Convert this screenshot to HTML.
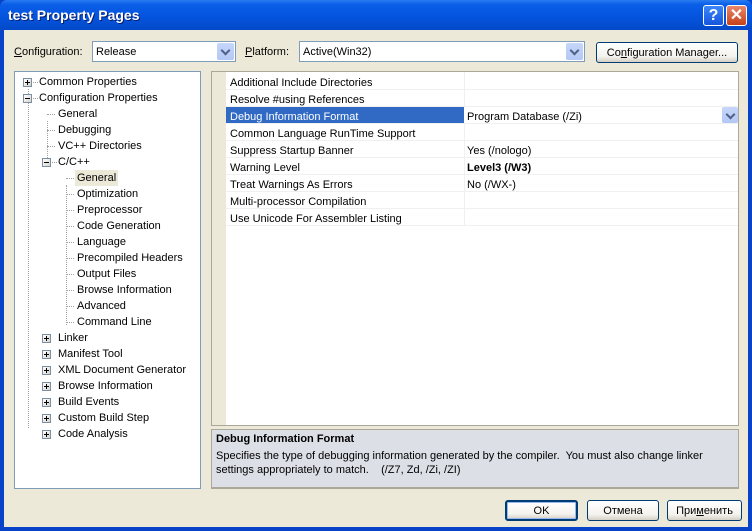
<!DOCTYPE html><html><head><style>
*{margin:0;padding:0;box-sizing:border-box}
body{width:752px;height:531px;overflow:hidden;background:#0842c8;font-family:"Liberation Sans",sans-serif;font-size:11px;color:#000;position:relative}
.a{position:absolute;white-space:nowrap}
#tb{left:0;top:0;width:752px;height:30px;background:linear-gradient(#2a7cf0 0,#0a5ee8 15%,#0453dc 60%,#0349c8 100%);border-radius:7px 7px 0 0}
#title{left:8px;top:7px;color:#fff;font-weight:bold;font-size:14px;text-shadow:1px 1px #0a1e6e}
#body{left:4px;top:30px;width:744px;height:497px;background:#ece9d8}
.cb{background:#fff;border:1px solid #7f9db9;height:21px;padding:4px 3px}
.dd{position:absolute;right:1px;top:1px;width:17px;height:17px;background:linear-gradient(#c6d6fb,#b3c8f5);border-radius:2px;}
.dd:after{content:"";position:absolute;left:5px;top:4px;width:5px;height:5px;border-right:2px solid #4d6185;border-bottom:2px solid #4d6185;transform:rotate(45deg)}
.btn{border:1px solid #003c74;border-radius:3px;background:linear-gradient(#fff,#f4f3ee 70%,#d6d0c5);text-align:center;padding-top:4px;height:21px}
.panel{background:#fff;border:1px solid #7f9db9}
.ti{position:absolute;height:16px;line-height:16px}
.pb{position:absolute;width:9px;height:9px;border:1px solid #7a8ea8;background:linear-gradient(135deg,#fff,#d8d4c8);}
.pb:before{content:"";position:absolute;left:1px;top:3px;width:5px;height:1px;background:#000}
.pb.p:after{content:"";position:absolute;left:3px;top:1px;width:1px;height:5px;background:#000}
.hl{position:absolute;border-top:1px dotted #a0a0a0;width:8px}
.vl{position:absolute;border-left:1px dotted #a0a0a0}
.row{position:absolute;left:14px;width:512px;height:17px;border-bottom:1px solid #f0f0f0;line-height:16px}
.row span{position:absolute;left:4px;top:2px}
.row b{position:absolute;left:241px;top:2px;font-weight:normal}
</style></head><body>
<div class="a" id="tb"></div>
<div class="a" id="title">test Property Pages</div>
<div class="a" style="left:703px;top:5px;width:21px;height:21px;border:1px solid #fff;border-radius:3px;background:linear-gradient(#3c86f8,#1556de);color:#fff;font-weight:bold;font-size:16px;text-align:center;line-height:19px">?</div>
<div class="a" style="left:726px;top:5px;width:21px;height:21px;border:1px solid #fff;border-radius:3px;background:linear-gradient(#e8886a,#c8401a);color:#fff;font-weight:bold;font-size:16px;text-align:center;line-height:19px">✕</div>
<div class="a" id="body"></div>

<div class="a" style="left:14px;top:46px"><u>C</u>onfiguration:</div>
<div class="a cb" style="left:92px;top:41px;width:144px">Release<div class="dd"></div></div>
<div class="a" style="left:245px;top:46px"><u>P</u>latform:</div>
<div class="a cb" style="left:299px;top:41px;width:286px">Active(Win32)<div class="dd"></div></div>
<div class="a btn" style="left:596px;top:42px;width:142px">Co<u>n</u>figuration Manager...</div>

<div class="a panel" style="left:14px;top:71px;width:187px;height:418px">
<div class="vl" style="left:13px;top:17px;height:339px"></div>
<div class="vl" style="left:32px;top:49px;height:43px"></div>
<div class="vl" style="left:51px;top:113px;height:140px"></div>
</div>

<div class="a panel" style="left:211px;top:71px;width:528px;height:355px;border-color:#aca899">
<div class="a" style="left:0;top:0;width:14px;height:353px;background:#ece9d8"></div>
<div class="a" style="left:252px;top:0;width:1px;height:153px;background:#f0f0f0"></div>
<div class="row" style="top:1px"><span>Additional Include Directories</span></div>
<div class="row" style="top:18px"><span>Resolve #using References</span></div>
<div class="row" style="top:35px;background:linear-gradient(90deg,#316ac5 0,#316ac5 238px,#fff 238px);color:#fff"><span>Debug Information Format</span><b style="color:#000">Program Database (/Zi)</b><div class="dd" style="right:0;top:0;width:16px;height:16px"></div></div>
<div class="row" style="top:52px"><span>Common Language RunTime Support</span></div>
<div class="row" style="top:69px"><span>Suppress Startup Banner</span><b>Yes (/nologo)</b></div>
<div class="row" style="top:86px"><span>Warning Level</span><b style="font-weight:bold">Level3 (/W3)</b></div>
<div class="row" style="top:103px"><span>Treat Warnings As Errors</span><b>No (/WX-)</b></div>
<div class="row" style="top:120px"><span>Multi-processor Compilation</span></div>
<div class="row" style="top:137px"><span>Use Unicode For Assembler Listing</span></div>
</div>
<div class="a" style="left:211px;top:429px;width:528px;height:60px;background:#dddfe7;border:1px solid #aca899;border-bottom:2px solid #aca899">
<div class="a" style="left:4px;top:3px;font-weight:bold">Debug Information Format</div>
<div class="a" style="left:4px;top:19px;line-height:14px">Specifies the type of debugging information generated by the compiler.&nbsp; You must also change linker<br>settings appropriately to match.&nbsp;&nbsp;&nbsp; (/Z7, Zd, /Zi, /ZI)</div>
</div>

<div class="a btn" style="left:505px;top:500px;width:73px;border-width:2px;box-shadow:inset 0 0 0 1px #98b8f0;padding-top:3px">OK</div>
<div class="a btn" style="left:587px;top:500px;width:72px">Отмена</div>
<div class="a btn" style="left:667px;top:500px;width:75px">При<u>м</u>енить</div>

<div class="a" style="left:14px;top:76px;width:186px;height:370px">
<div class="pb p" style="left:9px;top:2px"></div><div class="hl" style="left:19px;top:6px;width:5px"></div><div class="ti" style="left:25px;top:-2px">Common Properties</div>
<div class="pb" style="left:9px;top:18px"></div><div class="hl" style="left:19px;top:22px;width:5px"></div><div class="ti" style="left:25px;top:14px">Configuration Properties</div>
<div class="hl" style="left:33px;top:38px"></div><div class="ti" style="left:44px;top:30px">General</div>
<div class="hl" style="left:33px;top:54px"></div><div class="ti" style="left:44px;top:46px">Debugging</div>
<div class="hl" style="left:33px;top:70px"></div><div class="ti" style="left:44px;top:62px">VC++ Directories</div>
<div class="pb" style="left:28px;top:82px"></div><div class="hl" style="left:38px;top:86px;width:5px"></div><div class="ti" style="left:44px;top:78px">C/C++</div>
<div class="hl" style="left:52px;top:102px"></div><div class="ti" style="left:61px;top:94px;background:#ece9d8;padding:0 2px">General</div>
<div class="hl" style="left:52px;top:118px"></div><div class="ti" style="left:63px;top:110px">Optimization</div>
<div class="hl" style="left:52px;top:134px"></div><div class="ti" style="left:63px;top:126px">Preprocessor</div>
<div class="hl" style="left:52px;top:150px"></div><div class="ti" style="left:63px;top:142px">Code Generation</div>
<div class="hl" style="left:52px;top:166px"></div><div class="ti" style="left:63px;top:158px">Language</div>
<div class="hl" style="left:52px;top:182px"></div><div class="ti" style="left:63px;top:174px">Precompiled Headers</div>
<div class="hl" style="left:52px;top:198px"></div><div class="ti" style="left:63px;top:190px">Output Files</div>
<div class="hl" style="left:52px;top:214px"></div><div class="ti" style="left:63px;top:206px">Browse Information</div>
<div class="hl" style="left:52px;top:230px"></div><div class="ti" style="left:63px;top:222px">Advanced</div>
<div class="hl" style="left:52px;top:246px"></div><div class="ti" style="left:63px;top:238px">Command Line</div>
<div class="pb p" style="left:28px;top:258px"></div><div class="ti" style="left:44px;top:254px">Linker</div>
<div class="pb p" style="left:28px;top:274px"></div><div class="ti" style="left:44px;top:270px">Manifest Tool</div>
<div class="pb p" style="left:28px;top:290px"></div><div class="ti" style="left:44px;top:286px">XML Document Generator</div>
<div class="pb p" style="left:28px;top:306px"></div><div class="ti" style="left:44px;top:302px">Browse Information</div>
<div class="pb p" style="left:28px;top:322px"></div><div class="ti" style="left:44px;top:318px">Build Events</div>
<div class="pb p" style="left:28px;top:338px"></div><div class="ti" style="left:44px;top:334px">Custom Build Step</div>
<div class="pb p" style="left:28px;top:354px"></div><div class="ti" style="left:44px;top:350px">Code Analysis</div>
</div>
</body></html>
